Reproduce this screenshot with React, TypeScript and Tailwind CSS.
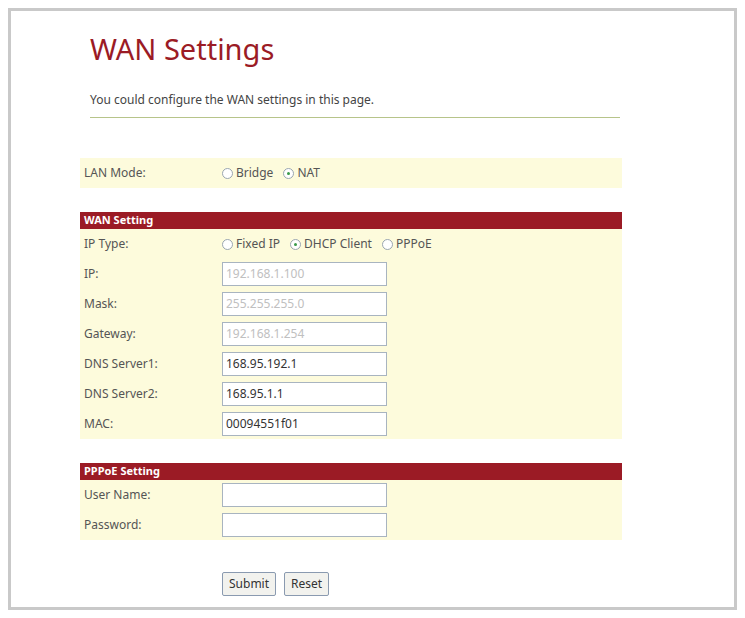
import React from 'react';

const wanRows = [
  { label: 'IP:', value: '192.168.1.100', disabled: true },
  { label: 'Mask:', value: '255.255.255.0', disabled: true },
  { label: 'Gateway:', value: '192.168.1.254', disabled: true },
  { label: 'DNS Server1:', value: '168.95.192.1', disabled: false },
  { label: 'DNS Server2:', value: '168.95.1.1', disabled: false },
  { label: 'MAC:', value: '00094551f01', disabled: false },
];

const Radio = ({ checked, label }: { checked?: boolean; label: string }) => (
  <span className="inline-flex items-center gap-[3px] mr-[10px]">
    <span className="w-[11px] h-[11px] rounded-full border border-[#9aa6b0] bg-white flex items-center justify-center">
      {checked && <span className="w-[3px] h-[3px] rounded-full bg-[#3a9a4a]" />}
    </span>
    {label}
  </span>
);

const Row = ({ label, children }: { label: string; children?: React.ReactNode }) => (
  <div className="flex items-center h-[30px] bg-[#fdfbdc]">
    <div className="w-[142px] pl-[4px]">{label}</div>
    <div className="flex items-center">{children}</div>
  </div>
);

const Field = ({ value, disabled }: { value?: string; disabled?: boolean }) => (
  <div
    className={`w-[165px] h-[24px] border border-[#a8b4c0] bg-white px-[3px] flex items-center ${
      disabled ? 'text-[#c0c0c0]' : 'text-[#333]'
    }`}
  >
    {value}
  </div>
);

const Header = ({ title }: { title: string }) => (
  <div className="h-[17px] bg-[#9b1b25] text-white font-bold pl-[4px] flex items-center text-[11px]">
    {title}
  </div>
);

export default function App() {
  return (
    <div className="w-[745px] h-[618px] bg-white p-[8px] font-['Liberation_Sans'] text-[12px] text-[#555]">
      <div className="w-full h-full border-[3px] border-[#c9c9c9] pl-[69px] pr-[113px] pt-[20px]">
        <h1 className="font-['Liberation_Serif'] text-[29px] text-[#9b1b25] ml-[10px] leading-[36px]">
          WAN Settings
        </h1>
        <p className="mt-[24px] ml-[10px] text-[12px] text-[#444]">You could configure the WAN settings in this page.</p>
        <div className="mt-[8px] ml-[10px] h-px bg-[#b7c48a] w-[530px]" />
        <div className="mt-[40px] w-[542px]">
          <Row label="LAN Mode:">
            <Radio label="Bridge" />
            <Radio label="NAT" checked />
          </Row>
          <div className="h-[24px]" />
          <Header title="WAN Setting" />
          <Row label="IP Type:">
            <Radio label="Fixed IP" />
            <Radio label="DHCP Client" checked />
            <Radio label="PPPoE" />
          </Row>
          {wanRows.map((r) => (
            <Row key={r.label} label={r.label}>
              <Field value={r.value} disabled={r.disabled} />
            </Row>
          ))}
          <div className="h-[24px]" />
          <Header title="PPPoE Setting" />
          <Row label="User Name:">
            <Field />
          </Row>
          <Row label="Password:">
            <Field />
          </Row>
          <div className="flex gap-[8px] ml-[142px] mt-[32px]">
            <button className="h-[24px] px-[6px] border border-[#8a9ab0] rounded-[2px] bg-[#f2f2ee] text-[#333]">Submit</button>
            <button className="h-[24px] px-[6px] border border-[#8a9ab0] rounded-[2px] bg-[#f2f2ee] text-[#333]">Reset</button>
          </div>
        </div>
      </div>
    </div>
  );
}
